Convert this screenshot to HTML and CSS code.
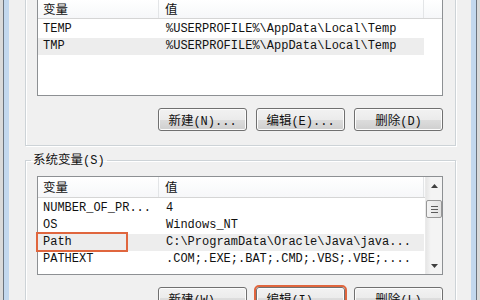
FILE: index.html
```html
<!DOCTYPE html>
<html lang="zh-CN">
<head>
    <meta charset="UTF-8">
    <meta name="viewport" content="width=device-width, initial-scale=1.0">
    <title>环境变量</title>
    <link rel="stylesheet" href="styles.css">
</head>
<body>

    <div class="window">
        <div class="dialog">

            <!-- user variables, top of the group is scrolled off -->
            <div class="group group-user">
                <div class="listbox">
                    <div class="list-main">
                        <div class="list-head">
                            <span class="col-name cjk">变量</span>
                            <span class="col-value cjk">值</span>
                        </div>
                        <div class="list-body">
                            <div class="row">
                                <span class="col-name">TEMP</span>
                                <span class="col-value">%USERPROFILE%\AppData\Local\Temp</span>
                            </div>
                            <div class="row selected">
                                <span class="col-name">TMP</span>
                                <span class="col-value">%USERPROFILE%\AppData\Local\Temp</span>
                            </div>
                        </div>
                    </div>
                </div>
                <div class="buttons">
                    <button class="button"><span class="cjk">新建</span>(N)...</button>
                    <button class="button"><span class="cjk">编辑</span>(E)...</button>
                    <button class="button"><span class="cjk">删除</span>(D)</button>
                </div>
            </div>

            <fieldset class="group group-system">
                <legend><span class="cjk">系统变量</span>(S)</legend>
                <div class="listbox">
                    <div class="list-main">
                        <div class="list-head">
                            <span class="col-name cjk">变量</span>
                            <span class="col-value cjk">值</span>
                        </div>
                        <div class="list-body">
                            <div class="row">
                                <span class="col-name">NUMBER_OF_PR...</span>
                                <span class="col-value">4</span>
                            </div>
                            <div class="row">
                                <span class="col-name">OS</span>
                                <span class="col-value">Windows_NT</span>
                            </div>
                            <div class="row selected">
                                <span class="col-name">Path</span>
                                <span class="col-value">C:\ProgramData\Oracle\Java\java...</span>
                                <span class="mark"></span>
                            </div>
                            <div class="row">
                                <span class="col-name">PATHEXT</span>
                                <span class="col-value">.COM;.EXE;.BAT;.CMD;.VBS;.VBE;....</span>
                            </div>
                        </div>
                    </div>
                    <div class="scrollbar">
                        <div class="arrow">
                            <svg width="7" height="4" viewBox="0 0 7 4"><path d="M0 4 L3.5 0 L7 4 Z" fill="#404040"/></svg>
                        </div>
                        <div class="thumb">
                            <span></span><span></span><span></span>
                        </div>
                        <div class="track"></div>
                        <div class="arrow">
                            <svg width="7" height="4" viewBox="0 0 7 4"><path d="M0 0 L3.5 4 L7 0 Z" fill="#404040"/></svg>
                        </div>
                    </div>
                </div>
                <div class="buttons">
                    <button class="button"><span class="cjk">新建</span>(W)...</button>
                    <button class="button marked"><span class="cjk">编辑</span>(I)...</button>
                    <button class="button"><span class="cjk">删除</span>(L)</button>
                </div>
            </fieldset>

        </div>
    </div>

</body>
</html>
```

FILE: styles.css
```css
html {
    box-sizing: border-box;
}
*, *:before, *:after {
    box-sizing: inherit;
}
body {
    margin: 0;
    padding: 0 3px;
    height: 300px;
    overflow: hidden;
    background: #dadada;
    font-family: 'Liberation Mono', 'Noto Sans CJK SC', monospace;
    font-size: 12px;
    color: #111;
}
.cjk {
    font-family: 'Noto Sans CJK SC', sans-serif;
    font-size: 12.5px;
}
/* Window frame */
.window {
    height: 100%;
    border-left: 1px solid #6b747e;
    border-right: 1px solid #6b747e;
    padding: 0 5px;
    background: #c3d8ee;
}
.dialog {
    height: 100%;
    background: #f0f0f0;
    padding: 0 15px 0 16px;
    overflow: hidden;
}
/* Group boxes */
.group {
    border: 1px solid #cdd3d7;
    box-shadow: inset 1px 1px 0 #fff, 1px 1px 0 #fff;
    padding: 0 12px 14px 11px;
    margin: 0;
}
.group-user {
    margin-top: -18px;
    padding-top: 16px;
}
.group-user .listbox {
    height: 97px;
}
.group-user .list-head {
    height: 19px;
}
.group-user .list-head span {
    line-height: 18px;
}
.group-system {
    margin-top: 5px;
    padding-top: 7px;
    min-width: 0;
}
.group-system legend {
    margin-left: -6px;
    padding: 0 2px;
    line-height: 16px;
    color: #111;
}
/* List views */
.listbox {
    display: flex;
    height: 99px;
    border: 1px solid #8d9093;
    background: #fff;
}
.list-main {
    flex: 1;
}
.list-head {
    display: flex;
    height: 21px;
    border-bottom: 1px solid #d5d5d5;
    background: linear-gradient(#ffffff, #f6f7f9);
}
.list-head span {
    line-height: 20px;
    border-right: 1px solid #e3e5e7;
}
.list-body {
    padding-top: 2px;
}
.row {
    display: flex;
    position: relative;
    height: 17px;
    line-height: 17px;
    width: 386px;
}
.row.selected {
    background: #ededed;
}
.col-name {
    width: 121px;
    padding-left: 5px;
    white-space: nowrap;
}
.col-value {
    width: 265px;
    padding-left: 6px;
    white-space: nowrap;
}
.row .col-value {
    padding-left: 7px;
}
.mark {
    position: absolute;
    left: -2px;
    top: -2px;
    width: 92px;
    height: 20px;
    border: 2px solid #e0663e;
}
/* Scrollbar */
.scrollbar {
    display: flex;
    flex-direction: column;
    width: 17px;
    background: linear-gradient(90deg, #e6e6e6, #f4f4f4 30%, #f4f4f4);
    border-left: 1px solid #eaeaea;
}
.arrow {
    height: 17px;
    display: flex;
    align-items: center;
    justify-content: center;
}
.thumb {
    margin-top: 6px;
    height: 18px;
    border: 1px solid #979797;
    border-radius: 2px;
    background: linear-gradient(90deg, #f4f4f4, #e2e2e2);
    display: flex;
    flex-direction: column;
    align-items: center;
    justify-content: center;
    gap: 2px;
}
.thumb span {
    width: 7px;
    height: 1px;
    background: #5c5c5c;
}
.track {
    flex: 1;
}
/* Buttons */
.buttons {
    display: flex;
    justify-content: flex-end;
    gap: 9px;
    margin-top: 12px;
}
.button {
    width: 89px;
    height: 23px;
    padding: 0;
    border: 1px solid #707070;
    border-radius: 3px;
    background: linear-gradient(#f2f2f2 0%, #ebebeb 50%, #dddddd 50%, #cfcfcf 100%);
    box-shadow: inset 0 0 0 1px #fcfcfc;
    font-family: inherit;
    font-size: 12px;
    color: #111;
}
.button.marked {
    outline: 2px solid #e0663e;
    outline-offset: 0;
}
```
